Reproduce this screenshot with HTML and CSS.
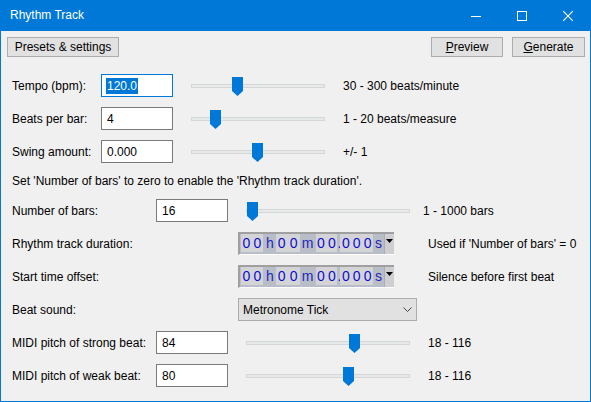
FILE: index.html
```html
<!DOCTYPE html>
<html>
<head>
<meta charset="utf-8">
<title>Rhythm Track</title>
<link rel="stylesheet" href="styles.css">
</head>
<body>
<div class="window">
  <div class="titlebar">
    <span class="title">Rhythm Track</span>
    <div class="caption">
      <span class="cap-btn"><svg width="10" height="10" viewBox="0 0 10 10"><path d="M0 5.5H10" stroke="#fff" stroke-width="1"/></svg></span>
      <span class="cap-btn"><svg width="10" height="10" viewBox="0 0 10 10"><rect x="0.5" y="0.5" width="9" height="9" fill="none" stroke="#fff" stroke-width="1"/></svg></span>
      <span class="cap-btn"><svg width="10" height="10" viewBox="0 0 10 10"><path d="M0 0L10 10M10 0L0 10" stroke="#fff" stroke-width="1.1"/></svg></span>
    </div>
  </div>
  <div class="content">
    <div class="toolbar">
      <button class="btn btn-presets">Presets &amp; settings</button>
      <div class="spacer"></div>
      <button class="btn btn-preview"><u>P</u>review</button>
      <button class="btn btn-generate"><u>G</u>enerate</button>
    </div>
    <div class="rows">
      <div class="row row-short">
        <span class="label">Tempo (bpm):</span>
        <div class="input focused"><span class="sel">120.0</span></div>
        <div class="slider"><div class="track"></div><svg class="thumb" style="left:41px" width="11" height="19" viewBox="0 0 11 19"><path d="M0 0H11V14L5.5 19L0 14Z" fill="#0078d7"/></svg></div>
        <span class="hint">30 - 300 beats/minute</span>
      </div>
      <div class="row row-short">
        <span class="label">Beats per bar:</span>
        <div class="input">4</div>
        <div class="slider"><div class="track"></div><svg class="thumb" style="left:19px" width="11" height="19" viewBox="0 0 11 19"><path d="M0 0H11V14L5.5 19L0 14Z" fill="#0078d7"/></svg></div>
        <span class="hint">1 - 20 beats/measure</span>
      </div>
      <div class="row row-short">
        <span class="label">Swing amount:</span>
        <div class="input">0.000</div>
        <div class="slider"><div class="track"></div><svg class="thumb" style="left:61px" width="11" height="19" viewBox="0 0 11 19"><path d="M0 0H11V14L5.5 19L0 14Z" fill="#0078d7"/></svg></div>
        <span class="hint">+/- 1</span>
      </div>
      <div class="message">Set 'Number of bars' to zero to enable the 'Rhythm track duration'.</div>
      <div class="row row-wide">
        <span class="label">Number of bars:</span>
        <div class="input">16</div>
        <div class="slider"><div class="track"></div><svg class="thumb" style="left:1px" width="11" height="19" viewBox="0 0 11 19"><path d="M0 0H11V14L5.5 19L0 14Z" fill="#0078d7"/></svg></div>
        <span class="hint hint-near">1 - 1000 bars</span>
      </div>
      <div class="row row-ctl">
        <span class="label">Rhythm track duration:</span>
        <div class="timectl">
          <span class="box box-2"><span class="d">0</span><span class="d">0</span></span>
          <span class="unit unit-h">h</span>
          <span class="box box-2b"><span class="d">0</span><span class="d">0</span></span>
          <span class="unit unit-m">m</span>
          <span class="box box-2"><span class="d">0</span><span class="d">0</span></span>
          <span class="unit unit-dot">.</span>
          <span class="box box-3"><span class="d">0</span><span class="d">0</span><span class="d">0</span></span>
          <span class="unit unit-s">s</span>
          <span class="drop"><svg width="7" height="4" viewBox="0 0 7 4"><path d="M0 0H7L3.5 4Z" fill="#000"/></svg></span>
        </div>
        <span class="hint hint-far">Used if 'Number of bars' = 0</span>
      </div>
      <div class="row row-ctl">
        <span class="label">Start time offset:</span>
        <div class="timectl">
          <span class="box box-2"><span class="d">0</span><span class="d">0</span></span>
          <span class="unit unit-h">h</span>
          <span class="box box-2b"><span class="d">0</span><span class="d">0</span></span>
          <span class="unit unit-m">m</span>
          <span class="box box-2"><span class="d">0</span><span class="d">0</span></span>
          <span class="unit unit-dot">.</span>
          <span class="box box-3"><span class="d">0</span><span class="d">0</span><span class="d">0</span></span>
          <span class="unit unit-s">s</span>
          <span class="drop"><svg width="7" height="4" viewBox="0 0 7 4"><path d="M0 0H7L3.5 4Z" fill="#000"/></svg></span>
        </div>
        <span class="hint hint-far">Silence before first beat</span>
      </div>
      <div class="row row-ctl">
        <span class="label">Beat sound:</span>
        <div class="select"><span>Metronome Tick</span><svg class="chev" width="9" height="5" viewBox="0 0 9 5"><path d="M0.5 0.5L4.5 4.5L8.5 0.5" fill="none" stroke="#444" stroke-width="1"/></svg></div>
      </div>
      <div class="row row-wide">
        <span class="label">MIDI pitch of strong beat:</span>
        <div class="input">84</div>
        <div class="slider"><div class="track"></div><svg class="thumb" style="left:103px" width="11" height="19" viewBox="0 0 11 19"><path d="M0 0H11V14L5.5 19L0 14Z" fill="#0078d7"/></svg></div>
        <span class="hint hint-far2">18 - 116</span>
      </div>
      <div class="row row-wide">
        <span class="label">MIDI pitch of weak beat:</span>
        <div class="input">80</div>
        <div class="slider"><div class="track"></div><svg class="thumb" style="left:97px" width="11" height="19" viewBox="0 0 11 19"><path d="M0 0H11V14L5.5 19L0 14Z" fill="#0078d7"/></svg></div>
        <span class="hint hint-far2">18 - 116</span>
      </div>
    </div>
  </div>
</div>
</body>
</html>
```

FILE: styles.css
```css
* { box-sizing: border-box; }
html, body {
  margin: 0;
  padding: 0;
  background: #f0f0f0;
}
body {
  font-family: "Liberation Sans", Arial, sans-serif;
  font-size: 12px;
  color: #000;
}
.window {
  width: 591px;
  height: 402px;
  border: 1px solid #0078d7;
  border-top: 0;
  background: #f0f0f0;
  display: flex;
  flex-direction: column;
}
.titlebar {
  height: 31px;
  background: #0078d7;
  display: flex;
  align-items: center;
  margin: 0 -1px;
  padding-left: 10px;
}
.title {
  color: #fff;
  font-size: 12px;
  flex: 1;
  padding-bottom: 1px;
}
.caption {
  display: flex;
  height: 31px;
}
.cap-btn {
  width: 46px;
  height: 31px;
  display: flex;
  align-items: center;
  justify-content: center;
}
.cap-btn svg { display: block; }
.content {
  flex: 1;
  padding: 6px 5px 0 6px;
}
.toolbar {
  display: flex;
  height: 20px;
  gap: 9px;
}
.spacer { flex: 1; }
.btn {
  height: 20px;
  background: #e1e1e1;
  border: 1px solid #adadad;
  font-family: inherit;
  font-size: 12px;
  color: #000;
  padding: 0;
  margin: 0;
  line-height: 18px;
}
.btn u { text-decoration: underline; text-underline-offset: 1px; }
.btn-presets { width: 112px; }
.btn-preview { width: 72px; }
.btn-generate { width: 73px; }
.rows {
  margin-top: 17px;
  padding-left: 5px;
  display: flex;
  flex-direction: column;
  gap: 10px;
}
.row {
  display: flex;
  align-items: center;
  height: 23px;
}
.label { flex: none; }
.row-short .label { width: 89px; }
.row-wide .label { width: 144px; }
.row-ctl .label { width: 226px; }
.input {
  width: 72px;
  height: 23px;
  border: 1px solid #7a7a7a;
  background: #fff;
  padding-left: 5px;
  display: flex;
  align-items: center;
}
.input.focused { border-color: #0078d7; padding-left: 4px; }
.sel {
  background: #0078d7;
  color: #fff;
  line-height: 16px;
  padding: 0 1px;
}
.slider {
  position: relative;
  height: 23px;
  margin-left: 18px;
  display: flex;
  align-items: center;
}
.row-short .slider { width: 134px; }
.row-wide .slider { width: 164px; }
.track {
  width: 100%;
  height: 4px;
  background: #e7eaea;
  border: 1px solid #d6d6d6;
}
.thumb {
  position: absolute;
  top: 3px;
  display: block;
}
.hint { margin-left: 18px; white-space: nowrap; }
.hint-near { margin-left: 13px; }
.hint-far { margin-left: 34px; }
.hint-far2 { margin-left: 18px; }
.message {
  height: 16px;
  line-height: 16px;
}
.timectl {
  width: 156px;
  height: 23px;
  border-top: 2px solid #a0a0a0;
  border-left: 2px solid #a0a0a0;
  border-bottom: 1px solid #fff;
  background: #b9bdc8;
  display: flex;
  font-family: "Liberation Sans", Arial, sans-serif;
  font-size: 14px;
  line-height: 18px;
}
.box {
  display: flex;
  height: 18px;
  background: #d4d4d6;
  color: #0c0cd0;
}
.box .d { flex: 1; text-align: center; }
.box-2 { width: 22px; }
.box-2b { width: 24px; }
.box-3 { width: 33px; }
.unit {
  height: 18px;
  text-align: center;
  color: #2626bc;
}
.unit-h { width: 12px; margin-left: 1px; }
.unit-m { width: 16px; }
.unit-dot { width: 3px; color: #0c0cd0; }
.unit-s { width: 11px; }
.timectl .box:first-child { margin-left: 1px; }
.drop {
  width: 10px;
  height: 20px;
  background: #cfcfd2;
  border-left: 1px solid #a8acb6;
  display: flex;
  justify-content: center;
  padding-top: 5px;
}
.drop svg { display: block; }
.select {
  width: 179px;
  height: 23px;
  background: #e1e1e1;
  border: 1px solid #adadad;
  padding-left: 4px;
  padding-right: 4px;
  display: flex;
  align-items: center;
  justify-content: space-between;
}
.chev { display: block; }
```
